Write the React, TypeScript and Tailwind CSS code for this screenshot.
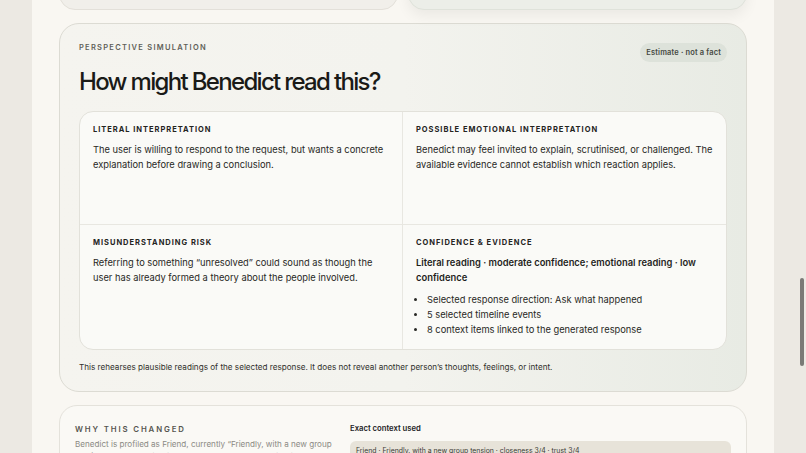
import React from 'react'

const font = { fontFamily: 'Inter, "Noto Sans", sans-serif' }

function Label({ children }: { children: React.ReactNode }) {
  return (
    <p className="text-[7.5px] leading-[10px] font-bold tracking-[0.13em] text-[#24241e] uppercase">
      {children}
    </p>
  )
}

function Body({ children }: { children: React.ReactNode }) {
  return <p className="mt-[7px] text-[9.3px] leading-[15px] text-[#282824]">{children}</p>
}

export default function App() {
  return (
    <div style={font} className="relative h-[453px] w-full overflow-hidden bg-[#ece9e3] flex justify-center">
      <div className="w-[742px] h-full bg-[#f9f7f2] px-[27px]">
        {/* cards above, scrolled off */}
        <div className="grid grid-cols-2 gap-[10px] -mt-[30px] h-[40px]">
          <div className="rounded-b-[16px] border border-[#e3e0d9] bg-[#f1efea]" />
          <div className="rounded-b-[16px] border border-[#dfe2da] bg-[#eceee8] shadow-[0_6px_14px_rgba(0,0,0,0.06)]" />
        </div>

        {/* Perspective simulation */}
        <section className="mt-[13px] rounded-[20px] border border-[#dcdbd3] bg-gradient-to-r from-[#f5f4ef] via-[#f3f3ee] to-[#e8ebe4] px-[19px] pt-[19px] pb-[18px]">
          <div className="flex items-start justify-between">
            <p className="text-[7.5px] leading-[10px] font-semibold tracking-[0.17em] text-[#5f5f58]">
              PERSPECTIVE SIMULATION
            </p>
            <span className="h-[19px] px-[6px] rounded-full bg-[#dde2da] text-[7.5px] font-semibold text-[#454a43] flex items-center tracking-[0.02em]">
              Estimate · not a fact
            </span>
          </div>
          <h1 className="mt-[3px] text-[24px] leading-[34px] font-medium tracking-[-0.07em] text-[#1a1a17]">
            How might Benedict read this?
          </h1>

          <div className="mt-[12px] grid grid-cols-[323px_1fr] grid-rows-[113px_auto] rounded-[14px] border border-[#e2e1da] bg-[#fafaf7] overflow-hidden">
            <div className="border-r border-b border-[#e8e7e1] px-[13px] pt-[13px]">
              <Label>Literal interpretation</Label>
              <Body>The user is willing to respond to the request, but wants a concrete explanation before drawing a conclusion.</Body>
            </div>
            <div className="border-b border-[#e8e7e1] px-[13px] pt-[13px]">
              <Label>Possible emotional interpretation</Label>
              <Body>Benedict may feel invited to explain, scrutinised, or challenged. The available evidence cannot establish which reaction applies.</Body>
            </div>
            <div className="border-r border-[#e8e7e1] px-[13px] pt-[13px] pb-[12px]">
              <Label>Misunderstanding risk</Label>
              <Body>Referring to something “unresolved” could sound as though the user has already formed a theory about the people involved.</Body>
            </div>
            <div className="px-[13px] pt-[13px] pb-[12px]">
              <Label>Confidence &amp; evidence</Label>
              <p className="mt-[7px] text-[9.4px] leading-[15px] font-semibold text-[#1f1f1c]">
                Literal reading · moderate confidence; emotional reading · low confidence
              </p>
              <ul className="mt-[7px] text-[9.3px] leading-[15px] text-[#282824] list-disc pl-[11px]">
                <li>Selected response direction: Ask what happened</li>
                <li>5 selected timeline events</li>
                <li>8 context items linked to the generated response</li>
              </ul>
            </div>
          </div>

          <p className="mt-[11px] text-[8.15px] leading-[12px] text-[#30302b]">
            This rehearses plausible readings of the selected response. It does not reveal another person’s thoughts, feelings, or intent.
          </p>
        </section>

        {/* Why this changed */}
        <section className="mt-[13px] rounded-[18px] border border-[#e4e2db] bg-[#faf9f5] px-[15px] pt-[18px] pb-[16px] grid grid-cols-[260px_1fr] gap-[15px]">
          <div>
            <p className="text-[7.8px] leading-[10px] font-semibold tracking-[0.24em] text-[#55554f]">WHY THIS CHANGED</p>
            <p className="mt-[4px] text-[8.1px] leading-[12px] text-[#8b8a84]">
              Benedict is profiled as Friend, currently “Friendly, with a new group tension”: closeness (3/4) changes warmth and trust (3/4) changes directness.
            </p>
          </div>
          <div>
            <p className="text-[7.7px] leading-[10px] font-semibold text-[#23231f]">Exact context used</p>
            <div className="mt-[7px] rounded-[6px] bg-[#e7e3d9] px-[6px] py-[5px] text-[6.9px] leading-[10px] text-[#3b3a35]">
              Friend · Friendly, with a new group tension · closeness 3/4 · trust 3/4
            </div>
          </div>
        </section>
      </div>

      {/* overlay scrollbar thumb */}
      <div className="absolute right-[2px] top-[278px] h-[88px] w-[4px] rounded-full bg-[#7a7a76]" />
    </div>
  )
}
